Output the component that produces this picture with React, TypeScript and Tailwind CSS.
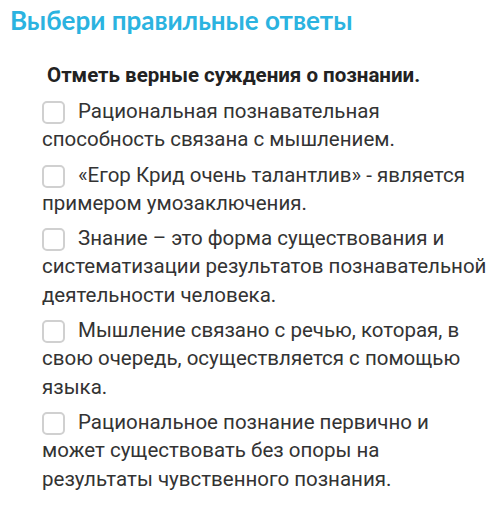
const items = [
  "Рациональная познавательная способность связана с мышлением.",
  "«Егор Крид очень талантлив» - является примером умозаключения.",
  "Знание – это форма существования и систематизации результатов познавательной деятельности человека.",
  "Мышление связано с речью, которая, в свою очередь, осуществляется с помощью языка.",
  "Рациональное познание первично и может существовать без опоры на результаты чувственного познания.",
];

function App() {
  return (
    <div className="h-[511px] w-[500px] bg-white font-['Roboto',sans-serif] text-[#333]">
      <h1 className="pl-[10px] pt-[5px] font-['Lato',sans-serif] text-[26px] font-bold leading-[30px] text-[#2bb3e0]">
        Выбери правильные ответы
      </h1>
      <p className="pl-[47px] pt-[28px] text-[20.5px] font-bold leading-[24px] text-[#222]">
        Отметь верные суждения о познании.
      </p>
      <div className="pl-[42px] pr-[8px] pt-[3px]">
        {items.map((text) => (
          <p key={text} className="pt-[7px] text-[20.5px] leading-[28.3px]">
            <span className="mr-[13px] inline-block h-[23px] w-[23px] rounded-[5px] border-2 border-[#d0d0d0] align-middle" />
            {text}
          </p>
        ))}
      </div>
    </div>
  );
}

export default App;
